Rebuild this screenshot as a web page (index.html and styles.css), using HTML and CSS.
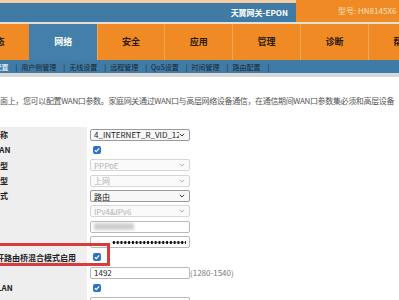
FILE: index.html
```html
<!DOCTYPE html>
<html lang="zh-CN">
<head>
    <meta charset="UTF-8">
    <meta name="viewport" content="width=device-width, initial-scale=1.0">
    <title>网络 - WAN配置</title>
    <link rel="stylesheet" href="styles.css">
</head>
<body>
    <div class="header">
        <div class="header-title">天翼网关-EPON</div>
        <div class="header-model">型号: HN8145X6</div>
    </div>

    <div class="menu">
        <a href="#">状态</a>
        <a href="#" class="active">网络</a>
        <a href="#">安全</a>
        <a href="#">应用</a>
        <a href="#">管理</a>
        <a href="#">诊断</a>
        <a href="#">帮助</a>
    </div>

    <div class="submenu">
        <a href="#" class="active">WAN配置</a><span>|</span>
        <a href="#">用户侧管理</a><span>|</span>
        <a href="#">无线设置</a><span>|</span>
        <a href="#">远程管理</a><span>|</span>
        <a href="#">QoS设置</a><span>|</span>
        <a href="#">时间管理</a><span>|</span>
        <a href="#">路由配置</a><span>|</span>
    </div>

    <p class="intro">面上，您可以配置WAN口参数。家庭网关通过WAN口与高层网络设备通信，在通信期间WAN口参数集必须和高层设备</p>

    <div class="wan-form">
        <div class="row">
            <label>连接名称</label>
            <div class="field">
                <div class="select"><span class="select-text">4_INTERNET_R_VID_123</span><svg width="6" height="4" viewBox="0 0 6 4"><polyline points="0.8,0.8 3,3 5.2,0.8" fill="none" stroke="#333" stroke-width="1"/></svg></div>
            </div>
        </div>
        <div class="row">
            <label>使能WAN</label>
            <div class="field">
                <span class="check"><svg width="8" height="8" viewBox="0 0 8 8"><polyline points="1.8,4.2 3.3,5.6 6.2,2.4" fill="none" stroke="#fff" stroke-width="1.2"/></svg></span>
            </div>
        </div>
        <div class="row">
            <label>封装类型</label>
            <div class="field">
                <div class="select disabled"><span class="select-text">PPPoE</span><svg width="6" height="4" viewBox="0 0 6 4"><polyline points="0.8,0.8 3,3 5.2,0.8" fill="none" stroke="#aaa" stroke-width="1"/></svg></div>
            </div>
        </div>
        <div class="row">
            <label>业务类型</label>
            <div class="field">
                <div class="select disabled"><span class="select-text">上网</span><svg width="6" height="4" viewBox="0 0 6 4"><polyline points="0.8,0.8 3,3 5.2,0.8" fill="none" stroke="#aaa" stroke-width="1"/></svg></div>
            </div>
        </div>
        <div class="row">
            <label>连接方式</label>
            <div class="field">
                <div class="select"><span class="select-text">路由</span><svg width="6" height="4" viewBox="0 0 6 4"><polyline points="0.8,0.8 3,3 5.2,0.8" fill="none" stroke="#333" stroke-width="1"/></svg></div>
            </div>
        </div>
        <div class="row">
            <label>IP协议</label>
            <div class="field">
                <div class="select disabled"><span class="select-text">IPv4&amp;IPv6</span><svg width="6" height="4" viewBox="0 0 6 4"><polyline points="0.8,0.8 3,3 5.2,0.8" fill="none" stroke="#aaa" stroke-width="1"/></svg></div>
            </div>
        </div>
        <div class="row">
            <label>用户名</label>
            <div class="field">
                <div class="input"><span class="blurred"></span></div>
            </div>
        </div>
        <div class="row">
            <label>密码</label>
            <div class="field">
                <div class="input"><span class="dots"></span></div>
            </div>
        </div>
        <div class="row">
            <label class="label-long">是否开路由桥混合模式启用</label>
            <div class="field">
                <span class="check"><svg width="8" height="8" viewBox="0 0 8 8"><polyline points="1.8,4.2 3.3,5.6 6.2,2.4" fill="none" stroke="#fff" stroke-width="1.2"/></svg></span>
            </div>
        </div>
        <div class="row">
            <label>MTU</label>
            <div class="field">
                <div class="input">1492</div>
                <span class="hint">(1280-1540)</span>
            </div>
        </div>
        <div class="row">
            <label>使能VLAN</label>
            <div class="field">
                <span class="check"><svg width="8" height="8" viewBox="0 0 8 8"><polyline points="1.8,4.2 3.3,5.6 6.2,2.4" fill="none" stroke="#fff" stroke-width="1.2"/></svg></span>
            </div>
        </div>
        <div class="row">
            <label>VLAN ID</label>
            <div class="field">
                <div class="input">41</div>
            </div>
        </div>
    </div>

    <div class="highlight"></div>
</body>
</html>
```

FILE: styles.css
```css
body {
    margin: 0;
    width: 399px;
    height: 300px;
    overflow: hidden;
    position: relative;
    background: #fff;
    font-family: "Noto Sans CJK SC", "Noto Sans", sans-serif;
    color: #333;
}

/* top bar */
.header {
    display: flex;
    height: 22px;
    border-bottom: 2px solid #e4e0d8;
}

.header-title {
    flex: 1;
    border-top: 3px solid #f4cda4;
    background-color: #3f7ba4;
    color: #fff;
    font-size: 8px;
    font-weight: bold;
    line-height: 19px;
    text-align: right;
    padding-right: 8px;
}

.header-model {
    width: 61px;
    padding-left: 42px;
    background-color: #ef8a25;
    color: #fbe2c3;
    font-size: 8px;
    line-height: 22px;
    white-space: nowrap;
}

/* main tabs */
.menu {
    display: flex;
    height: 36px;
    margin-left: -39px;
    background-color: #ef8a25;
}

.menu a {
    flex: none;
    width: 67.8px;
    box-sizing: border-box;
    border-left: 1px solid #f3a75a;
    color: #2b1a08;
    font-size: 9px;
    font-weight: bold;
    line-height: 36px;
    text-align: center;
    text-decoration: none;
}

.menu a.active {
    background-color: #437fa8;
    border-left-color: #437fa8;
    color: #fff;
}

/* sub menu */
.submenu {
    display: flex;
    align-items: center;
    height: 13px;
    margin-left: -21px;
    background-color: #3f7ba4;
    border-bottom: 4px solid #d9d9d9;
    font-size: 7px;
    white-space: nowrap;
}

.submenu a {
    color: #1c2630;
    text-decoration: none;
}

.submenu a.active {
    color: #fff;
}

.submenu span {
    margin: 0 4px 0 7px;
    color: #1c2630;
}

.intro {
    margin: 18px 0 0;
    height: 24px;
    font-size: 8px;
    line-height: 12px;
    letter-spacing: -0.35px;
    color: #555;
    white-space: nowrap;
}

/* form */
.wan-form {
    margin: 8px 0 0 -24px;
}

.row {
    display: grid;
    grid-template-columns: 111px 1fr;
    height: 15.35px;
}

.row label {
    background-color: #eeeeee;
    color: #222;
    font-size: 8px;
    font-weight: bold;
    line-height: 15.35px;
    white-space: nowrap;
    overflow: hidden;
}

.row .label-long {
    text-indent: 4px;
}

.field {
    display: flex;
    align-items: center;
    padding-left: 3px;
    font-size: 8px;
}

.select {
    display: flex;
    align-items: center;
    justify-content: space-between;
    width: 100px;
    height: 12px;
    box-sizing: border-box;
    padding: 0 4px 0 3px;
    border: 1px solid #9a9a9a;
    border-radius: 2px;
    background-color: #f7f7f7;
    color: #222;
}

.select.disabled {
    border-color: #d6d6d6;
    background-color: #fafafa;
    color: #b2b2b2;
}

.select-text {
    width: 86px;
    overflow: hidden;
    white-space: nowrap;
}

.check {
    display: flex;
    width: 8px;
    height: 8px;
    margin-left: 3px;
    border-radius: 2px;
    background-color: #2a72c9;
}

.input {
    display: flex;
    align-items: center;
    width: 100px;
    height: 12px;
    box-sizing: border-box;
    padding: 0 3px;
    border: 1px solid #b9b9b9;
    border-radius: 2px;
    background-color: #fff;
    color: #222;
}

.blurred {
    width: 40px;
    height: 7px;
    background-color: #cfcfcf;
    filter: blur(1.5px);
}

.dots {
    width: 76px;
    height: 5px;
    margin-left: 18px;
    background: radial-gradient(circle, #111 1.2px, transparent 1.6px) 0 0 / 3.8px 5px;
}

.hint {
    color: #777;
}

/* red annotation drawn over the screenshot */
.highlight {
    position: absolute;
    left: -5px;
    top: 243px;
    width: 115px;
    height: 23px;
    box-sizing: border-box;
    border: 3px solid #d93a3e;
}
```
